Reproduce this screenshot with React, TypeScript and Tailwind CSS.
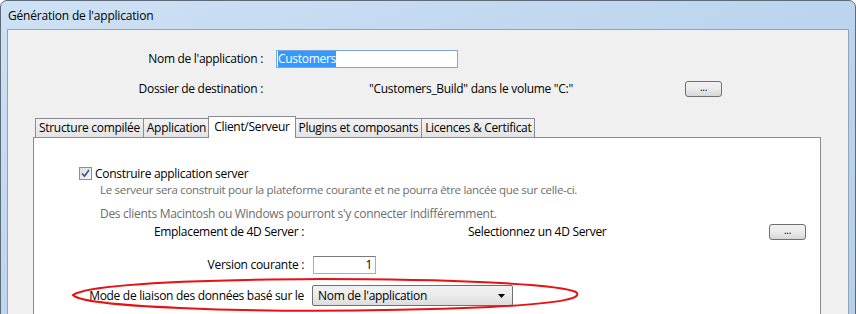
import React from "react";

const Btn = ({ className = "" }: { className?: string }) => (
  <div
    className={
      "w-[37px] h-[16px] rounded-[3px] border border-[#707070] bg-gradient-to-b from-[#f2f2f2] via-[#ebebeb] to-[#d6d6d6] flex items-center justify-center text-[10px] leading-none pb-[4px] " +
      className
    }
  >
    ...
  </div>
);

const Tab = ({ label, active = false }: { label: string; active?: boolean }) =>
  active ? (
    <div className="relative z-10 h-[22px] px-[5px] -mx-[1px] border border-b-0 border-[#898c95] bg-white flex items-start pt-[1px] leading-[18px]">
      {label}
    </div>
  ) : (
    <div className="h-[20px] px-[3px] border border-r-0 border-[#898c95] bg-gradient-to-b from-[#f3f3f3] to-[#e3e3e3] flex items-start leading-[18px]">
      {label}
    </div>
  );

export default function App() {
  return (
    <div className="w-[856px] h-[314px] overflow-hidden bg-white font-['Segoe_UI','Open_Sans',sans-serif] text-[12px] tracking-[-0.3px] text-black">
      <div className="w-[856px] h-[340px] rounded-t-[7px] border border-[#5d6a7a] bg-gradient-to-br from-[#cfe1f4] via-[#bcd4ee] to-[#b7d0ea] px-[6px] flex flex-col">
        <div className="h-[28px] flex items-center pl-[1px] pt-[2px] tracking-[-0.2px]">
          Génération de l'application
        </div>
        <div className="flex-1 border border-[#8fa3bc] bg-[#f0f0f0] flex flex-col">
          {/* Row 1 */}
          <div className="mt-[20px] h-[18px] flex items-center">
            <div className="w-[256px] text-right pr-[1px]">Nom de l'application :</div>
            <div className="ml-[12px] w-[182px] h-[18px] border border-[#7fa7d3] bg-white flex items-center pl-[1px]">
              <span className="bg-[#3399ff] text-white leading-[16px]">Customers</span>
            </div>
          </div>
          {/* Row 2 */}
          <div className="mt-[13px] h-[16px] flex items-center">
            <div className="w-[256px] text-right pr-[1px]">Dossier de destination :</div>
            <div className="ml-[105px] w-[316px]">"Customers_Build" dans le volume "C:"</div>
            <Btn />
          </div>
          {/* Tabs */}
          <div className="mt-[19px] ml-[25px] w-[788px] flex flex-col">
            <div className="flex items-end pl-[2px] -mb-[1px] relative z-10">
              <Tab label="Structure compilée" />
              <Tab label="Application" />
              <Tab label="Client/Serveur" active />
              <Tab label="Plugins et composants" />
              <div className="h-[20px] px-[3px] border border-[#898c95] bg-gradient-to-b from-[#f3f3f3] to-[#e3e3e3] flex items-start leading-[18px]">
                Licences &amp; Certificat
              </div>
            </div>
            <div className="relative h-[200px] border border-[#898c95] bg-white flex flex-col">
              <div className="mt-[29px] ml-[45px] flex items-center h-[13px]">
                <div className="w-[13px] h-[13px] border border-[#8e8f8f] bg-gradient-to-br from-[#dcdcdc] to-[#fafafa] p-[1px] flex items-center justify-center">
                  <svg width="9" height="9" viewBox="0 0 9 9">
                    <path d="M1 4.5 L3.5 7.2 L8 1" fill="none" stroke="#3f5495" strokeWidth="1.7" />
                  </svg>
                </div>
                <span className="ml-[3px]">Construire application server</span>
              </div>
              <div className="ml-[66px] mt-[2px] text-[11.5px] text-[#6d6d6d] leading-[16px]">
                Le serveur sera construit pour la plateforme courante et ne pourra être lancée que sur celle-ci.
              </div>
              <div className="ml-[66px] mt-[9px] text-[#6d6d6d] leading-[14px]">
                Des clients Macintosh ou Windows pourront s'y connecter indifféremment.
              </div>
              <div className="mt-[2px] h-[17px] flex items-center">
                <div className="w-[271px] text-right pr-[1px] leading-[15px]">Emplacement de 4D Server :</div>
                <div className="ml-[163px] w-[301px] leading-[15px]">Selectionnez un 4D Server</div>
                <Btn />
              </div>
              <div className="mt-[16px] h-[18px] flex items-center">
                <div className="w-[271px] text-right pr-[1px]">Version courante :</div>
                <div className="ml-[8px] w-[63px] h-[18px] border border-[#abadb3] border-t-[#7a7a7a] bg-white text-right pr-[3px] leading-[16px]">
                  1
                </div>
              </div>
              <div className="mt-[11px] h-[21px] flex items-center">
                <div className="w-[271px] text-right pr-[1px]">Mode de liaison des données basé sur le</div>
                <div className="ml-[7px] w-[201px] h-[21px] rounded-[2px] border border-[#707070] bg-gradient-to-b from-[#f2f2f2] via-[#ebebeb] to-[#dcdcdc] flex items-center pl-[5px] pr-[7px]">
                  <span className="flex-1">Nom de l'application</span>
                  <svg width="7" height="4" viewBox="0 0 7 4">
                    <path d="M0 0 H7 L3.5 4 Z" fill="#000" />
                  </svg>
                </div>
              </div>
              <svg
                className="absolute left-[36px] top-[139px] pointer-events-none"
                width="512"
                height="38"
                viewBox="0 0 512 38"
              >
                <path
                  d="M3 18 C 20 7, 120 3, 250 2 C 380 2, 490 7, 506 15 C 512 20, 500 26, 420 30 C 320 34, 200 35, 110 31 C 40 28, 8 24, 3 18 Z"
                  fill="none"
                  stroke="#ea1010"
                  strokeWidth="2"
                />
              </svg>
            </div>
          </div>
        </div>
      </div>
    </div>
  );
}
